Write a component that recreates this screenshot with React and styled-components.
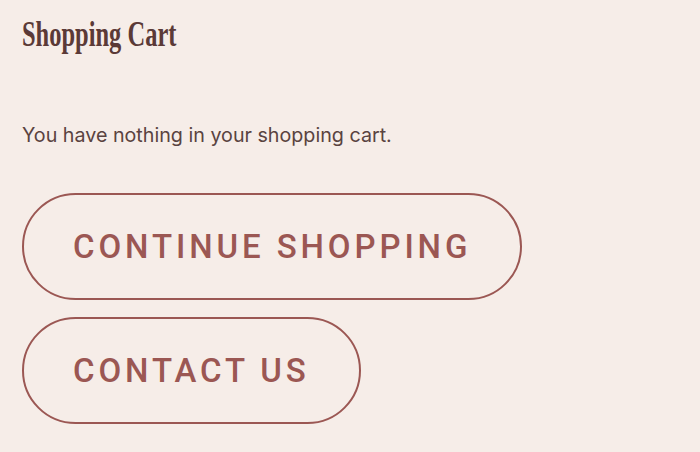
import styled, { createGlobalStyle } from "styled-components";

const Global = createGlobalStyle`
  html, body {
    margin: 0;
    padding: 0;
    background: #f6ede8;
  }
`;

const Page = styled.main`
  padding: 12px 22px 0 22px;
  display: flex;
  flex-direction: column;
  align-items: flex-start;
`;

const Title = styled.h1`
  margin: 0;
  font-family: "Liberation Serif", "Times New Roman", serif;
  font-weight: 700;
  font-size: 36px;
  line-height: 44px;
  color: #5b3a37;
  transform: scaleX(0.68);
  transform-origin: left center;
  white-space: nowrap;
`;

const Message = styled.p`
  margin: 66px 0 0 0;
  font-family: "Inter", "Liberation Sans", sans-serif;
  font-size: 19.7px;
  line-height: 26px;
  color: #5a4340;
`;

const Actions = styled.div`
  margin-top: 45px;
  display: flex;
  flex-direction: column;
  align-items: flex-start;
  gap: 17px;
`;

const PillButton = styled.button`
  box-sizing: border-box;
  height: 107px;
  padding: 0 49px 0 49px;
  border: 2.5px solid #9b5753;
  border-radius: 54px;
  background: transparent;
  color: #9b5753;
  font-family: "Roboto", "Liberation Sans", sans-serif;
  font-weight: 500;
  font-size: 33px;
  letter-spacing: 3.9px;
  text-transform: uppercase;
  cursor: pointer;
`;

export default function App() {
  return (
    <>
      <Global />
      <Page>
        <Title>Shopping Cart</Title>
        <Message>You have nothing in your shopping cart.</Message>
        <Actions>
          <PillButton>Continue shopping</PillButton>
          <PillButton>Contact us</PillButton>
        </Actions>
      </Page>
    </>
  );
}
